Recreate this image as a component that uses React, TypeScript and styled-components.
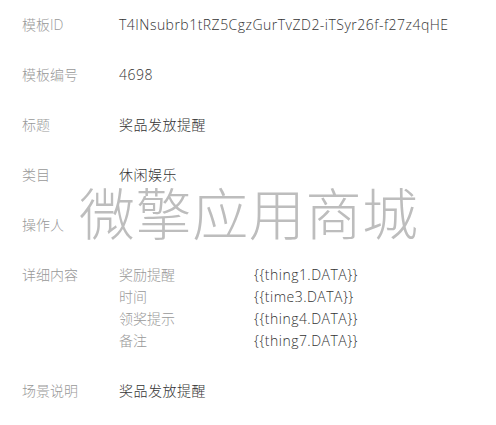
import React from "react";
import styled, { createGlobalStyle } from "styled-components";

const Global = createGlobalStyle`
  html, body { margin: 0; padding: 0; background: #fff; }
  body { font-family: "Open Sans", "Noto Sans CJK SC", sans-serif; }
`;

const Page = styled.div`
  position: relative;
  width: 496px;
  height: 425px;
  padding: 14px 0 0 22px;
  box-sizing: border-box;
  overflow: hidden;
`;

const List = styled.div`
  display: flex;
  flex-direction: column;
  gap: 28px;
`;

const Row = styled.div`
  display: grid;
  grid-template-columns: 97px 1fr;
  font-size: 14px;
  line-height: 22px;
  font-weight: 300;
`;

const Label = styled.div`
  color: #999;
`;

const Value = styled.div`
  color: #333;
  white-space: nowrap;
  letter-spacing: 0.48px;
`;

const Detail = styled.div`
  display: grid;
  grid-template-columns: 135px 1fr;
`;

const SubLabel = styled.div`
  color: #999;
`;

const Watermark = styled.div`
  position: absolute;
  left: 79px;
  top: 176px;
  font-family: "Noto Sans CJK SC", sans-serif;
  font-size: 56px;
  line-height: 70px;
  font-weight: 300;
  color: #bdbdbd;
  letter-spacing: 0.6px;
  white-space: nowrap;
  pointer-events: none;
`;

const details = [
  ["奖励提醒", "{{thing1.DATA}}"],
  ["时间", "{{time3.DATA}}"],
  ["领奖提示", "{{thing4.DATA}}"],
  ["备注", "{{thing7.DATA}}"],
];

export default function App() {
  return (
    <Page>
      <Global />
      <List>
        <Row>
          <Label>模板ID</Label>
          <Value>T4INsubrb1tRZ5CgzGurTvZD2-iTSyr26f-f27z4qHE</Value>
        </Row>
        <Row>
          <Label>模板编号</Label>
          <Value>4698</Value>
        </Row>
        <Row>
          <Label>标题</Label>
          <Value>奖品发放提醒</Value>
        </Row>
        <Row>
          <Label>类目</Label>
          <Value>休闲娱乐</Value>
        </Row>
        <Row>
          <Label>操作人</Label>
          <Value></Value>
        </Row>
        <Row>
          <Label>详细内容</Label>
          <Detail>
            {details.map(([k, v]) => (
              <React.Fragment key={k}>
                <SubLabel>{k}</SubLabel>
                <Value>{v}</Value>
              </React.Fragment>
            ))}
          </Detail>
        </Row>
        <Row>
          <Label>场景说明</Label>
          <Value>奖品发放提醒</Value>
        </Row>
      </List>
      <Watermark>微擎应用商城</Watermark>
    </Page>
  );
}
